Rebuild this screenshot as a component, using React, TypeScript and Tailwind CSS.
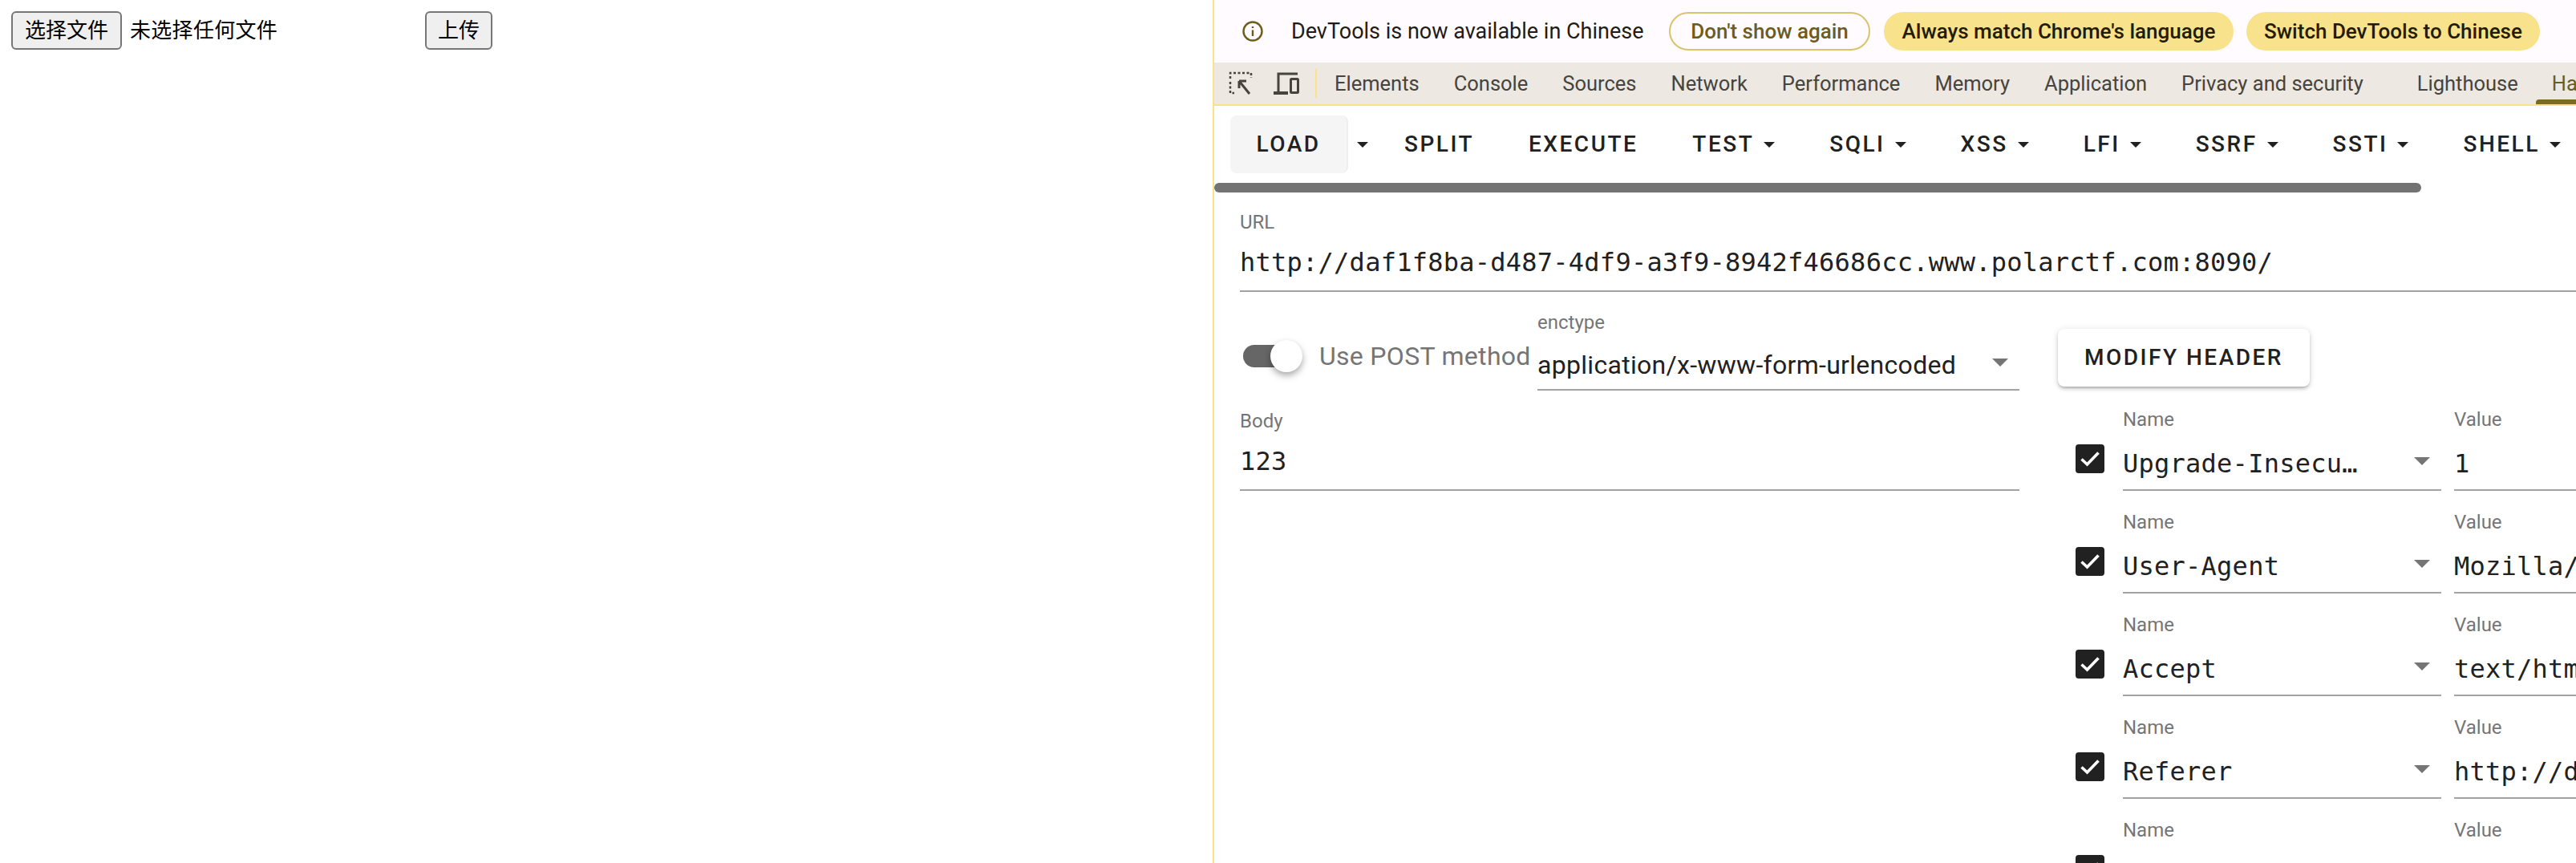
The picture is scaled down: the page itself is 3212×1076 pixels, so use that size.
const ui = "font-['Roboto',sans-serif]";
const mono = "font-['DejaVu_Sans_Mono',monospace] text-[32px] tracking-[0.25px] text-[#212121]";

const tools = [
  { label: 'SPLIT' },
  { label: 'EXECUTE' },
  { label: 'TEST', menu: true },
  { label: 'SQLI', menu: true },
  { label: 'XSS', menu: true },
  { label: 'LFI', menu: true },
  { label: 'SSRF', menu: true },
  { label: 'SSTI', menu: true },
  { label: 'SHELL', menu: true },
];

const tabs = ['Elements', 'Console', 'Sources', 'Network', 'Performance', 'Memory', 'Application'];

const headers = [
  { name: 'Upgrade-Insecure-Requests', value: '1' },
  { name: 'User-Agent', value: 'Mozilla/5.0 (Macintosh; Intel Mac OS X 10_15_7)' },
  { name: 'Accept', value: 'text/html,application/xhtml+xml,application/xml' },
  { name: 'Referer', value: 'http://daf1f8ba-d487-4df9-a3f9-8942f46686cc.www.polarctf.com:8090/' },
  { name: 'Content-Type', value: 'application/x-www-form-urlencoded' },
];

function Caret() {
  return <span className="inline-block w-0 h-0 border-x-[7px] border-x-transparent border-t-[7px] border-t-[#212121]" />;
}

function SelectArrow() {
  return <span className="inline-block w-0 h-0 border-x-[10px] border-x-transparent border-t-[10px] border-t-[#757575]" />;
}

function Checkbox() {
  return (
    <div className="w-9 h-9 mt-[45px] rounded bg-[#212121] flex items-center justify-center shrink-0">
      <svg width="30" height="30" viewBox="0 0 30 30" fill="none">
        <path d="M4.5 15.5 L11.5 22 L25.5 7.5" stroke="white" strokeWidth="3.6" />
      </svg>
    </div>
  );
}

export default function App() {
  return (
    <div className={`flex w-[3212px] h-[1076px] overflow-hidden bg-white ${ui}`}>
      {/* page under test */}
      <div className="w-[1512px] shrink-0 pt-[14px] pl-[14px] font-['Liberation_Sans','Noto_Sans_CJK_SC',sans-serif]">
        <div className="flex items-center">
          <button className="h-12 w-[138px] bg-[#efefef] border-2 border-[#767676] rounded-md text-[26px] leading-none text-black">
            选择文件
          </button>
          <span className="ml-[10px] w-[368px] text-[26px] tracking-[0.3px] text-black">未选择任何文件</span>
          <button className="h-12 w-[84px] bg-[#efefef] border-2 border-[#767676] rounded-md text-[26px] leading-none text-black">
            上传
          </button>
        </div>
      </div>

      {/* devtools */}
      <div className="flex-1 min-w-0 border-l-2 border-[#f9e28c] flex flex-col">
        <div className="h-[78px] bg-[#fffbff] flex items-center shrink-0 text-[27px]">
          <svg className="ml-[34px] shrink-0" width="28" height="28" viewBox="0 0 28 28" fill="none">
            <circle cx="14" cy="14" r="11.5" stroke="#6d5d1c" strokeWidth="2.4" />
            <path d="M14 12.5 V20 M14 8 V10" stroke="#6d5d1c" strokeWidth="2.4" />
          </svg>
          <span className="ml-[34px] w-[438px] shrink-0 text-[#1f1b16] whitespace-nowrap">DevTools is now available in Chinese</span>
          <button className="ml-[33px] h-12 w-[251px] shrink-0 rounded-full border-2 border-[#d9c36b] text-[#6d5d1c] font-medium text-[26px]">
            Don't show again
          </button>
          <button className="ml-[17px] h-12 w-[436px] shrink-0 rounded-full bg-[#f9e28c] text-[#231b00] font-medium text-[26px]">
            Always match Chrome's language
          </button>
          <button className="ml-[16px] h-12 w-[366px] shrink-0 rounded-full bg-[#f9e28c] text-[#231b00] font-medium text-[26px]">
            Switch DevTools to Chinese
          </button>
        </div>

        <div className="h-[54px] bg-[#ede8e1] border-b-2 border-[#f9e28c] flex items-center shrink-0 text-[25.5px] text-[#46443c] whitespace-nowrap overflow-hidden">
          <svg className="ml-[18px] shrink-0" width="30" height="30" viewBox="0 0 30 30" fill="none">
            <path d="M2 9 V2 H28 V8 M2 13 V27 H7" stroke="#46443c" strokeWidth="2.5" strokeDasharray="3 2.5" />
            <path d="M13 12 L13 21 M13 12 L22 12 M13 12 L26 28" stroke="#46443c" strokeWidth="3" />
          </svg>
          <svg className="ml-[24px] shrink-0" width="36" height="30" viewBox="0 0 36 30" fill="none">
            <path d="M8 26 V3 H32" stroke="#46443c" strokeWidth="3" />
            <path d="M2 27 H20" stroke="#46443c" strokeWidth="4" />
            <rect x="23.5" y="9.5" width="9" height="17" rx="1" stroke="#46443c" strokeWidth="3" />
          </svg>
          <span className="ml-[18px] w-[2px] h-[36px] bg-[#f9e28c] shrink-0" />
          <div className="ml-[22px] flex gap-[43px] shrink-0">
            {tabs.map((tab) => (
              <span key={tab}>{tab}</span>
            ))}
            <span>Privacy and security</span>
            <span className="ml-[24px]">Lighthouse</span>
          </div>
          <div className="ml-[22px] h-full flex flex-col justify-center relative pl-5 shrink-0 text-[#6d5d1c]">
            <span>Hackbar</span>
            <span className="absolute left-0 bottom-0 w-[120px] h-[6px] rounded-t bg-[#7a6a24]" />
          </div>
        </div>

        <div className="h-[96px] pt-3 pl-5 flex shrink-0 overflow-hidden text-[28px] font-medium tracking-[2.5px] text-[#212121] whitespace-nowrap">
          <button className="h-[72px] w-[147px] shrink-0 bg-[#f5f5f5] rounded-lg border-r-2 border-[#eeeeee]">LOAD</button>
          <button className="h-[72px] w-[36px] shrink-0 flex items-center justify-center"><Caret /></button>
          {tools.map((tool) => (
            <button key={tool.label} className="h-[72px] px-[34px] flex items-center gap-3 shrink-0">
              {tool.label}
              {tool.menu && <Caret />}
            </button>
          ))}
        </div>

        <div className="w-[1505px] h-3 rounded-full bg-[#737373] shrink-0" />

        <div className="pl-8">
          <div className="mt-[23px] h-7 leading-7 text-2xl text-[#757575]">URL</div>
          <div className={`h-[73px] flex items-center border-b-2 border-[#a3a3a3] whitespace-nowrap ${mono}`}>
            http://daf1f8ba-d487-4df9-a3f9-8942f46686cc.www.polarctf.com:8090/
          </div>

          <div className="flex gap-12">
            <div className="w-[972px] shrink-0">
              <div className="flex">
                <div className="flex items-center h-[123px] pt-[37px] pl-1 w-[371px] shrink-0">
                  <div className="flex items-center">
                    <span className="w-[50px] h-7 rounded-l-full bg-[#666666]" />
                    <span className="-ml-4 w-10 h-10 rounded-full bg-white shadow-[0_4px_8px_rgba(0,0,0,0.35)]" />
                  </div>
                  <span className="ml-[21px] text-[32px] tracking-[0.3px] text-[#757575] whitespace-nowrap">Use POST method</span>
                </div>
                <div className="flex-1">
                  <div className="mt-6 h-7 leading-7 text-2xl text-[#757575]">enctype</div>
                  <div className="h-[71px] flex items-center justify-between border-b-2 border-[#a3a3a3] pr-[14px] pt-2 text-[32px] tracking-[0.3px] text-[#212121]">
                    application/x-www-form-urlencoded
                    <span className="-mt-[5px] flex"><SelectArrow /></span>
                  </div>
                </div>
              </div>
              <div className="mt-6 h-7 leading-7 text-2xl text-[#757575]">Body</div>
              <div className={`h-[73px] flex items-center border-b-2 border-[#a3a3a3] ${mono}`}>
                123
              </div>
            </div>

            <div className="flex-1 min-w-0">
              <button className="mt-[46px] h-[72px] w-[314px] rounded-lg bg-white text-[28px] font-medium tracking-[2.5px] text-[#212121] shadow-[0_3px_3px_-2px_rgba(0,0,0,0.2),0_3px_4px_rgba(0,0,0,0.14),0_1px_8px_rgba(0,0,0,0.12)]">
                MODIFY HEADER
              </button>
              <div className="mt-[27px] flex flex-col gap-[25px]">
                {headers.map((header) => (
                  <div key={header.name} className="flex pl-[22px] gap-4">
                    <div className="w-[43px] shrink-0">
                      <Checkbox />
                    </div>
                    <div className="w-[397px] shrink-0">
                      <div className="h-7 leading-7 text-2xl text-[#757575]">Name</div>
                      <div className={`h-[75px] flex items-center border-b-2 border-[#a3a3a3] pr-[14px] pt-2 ${mono}`}>
                        <span className="flex-1 min-w-0 max-w-[300px] truncate">{header.name}</span>
                        <span className="ml-auto -mt-[6px] flex"><SelectArrow /></span>
                      </div>
                    </div>
                    <div className="flex-1 min-w-0 overflow-hidden">
                      <div className="h-7 leading-7 text-2xl text-[#757575]">Value</div>
                      <div className={`h-[75px] flex items-center border-b-2 border-[#a3a3a3] pt-2 whitespace-nowrap overflow-hidden ${mono}`}>
                        {header.value}
                      </div>
                    </div>
                  </div>
                ))}
              </div>
            </div>
          </div>
        </div>
      </div>
    </div>
  );
}
